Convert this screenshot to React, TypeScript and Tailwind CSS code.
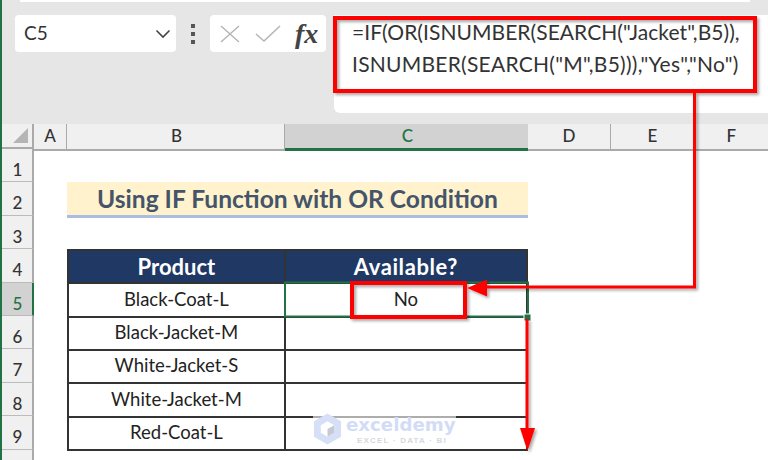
const rowNums = [1, 2, 3, 4, 5, 6, 7, 8, 9];
const products: Record<number, string> = {
  5: 'Black-Coat-L',
  6: 'Black-Jacket-M',
  7: 'White-Jacket-S',
  8: 'White-Jacket-M',
  9: 'Red-Coat-L',
};

const Cols = ({ children }: { children?: React.ReactNode }) => (
  <div className="grid h-full grid-cols-[33px_218px_243px_83px_84px_73px]">{children}</div>
);

const FormulaBar = () => (
  <div className="relative flex h-[124px] items-start gap-[7px] bg-[#e6e6e6] pt-[15px] pl-[13px]">
    {/* strip of the ribbon above the formula bar */}
    <div className="absolute top-0 left-[18px] h-[2px] w-[730px] bg-white" />
    <div className="flex h-[37px] w-[161px] items-center justify-between rounded-[4px] bg-white pr-[5px] pl-[9px] text-[19px] text-[#333]">
      C5
      <svg width="16" height="10" viewBox="0 0 16 10" fill="none" stroke="#444" strokeWidth="1.6"><path d="M1.5 1.5 8 8l6.5-6.500" /></svg>
    </div>
    <div className="flex h-[37px] w-[20px] flex-col items-center justify-center gap-[4px]">
      <span className="h-[4px] w-[4px] bg-[#555]" />
      <span className="h-[4px] w-[4px] bg-[#555]" />
      <span className="h-[4px] w-[4px] bg-[#555]" />
    </div>
    <div className="flex h-[37px] w-[116px] items-center rounded-[4px] bg-white pl-[10px]">
      <svg width="20" height="18" viewBox="0 0 20 18" fill="none" stroke="#b5b5b5" strokeWidth="1.5"><path d="M1 1l18 16M19 1 1 17" /></svg>
      <svg className="ml-[15px]" width="26" height="17" viewBox="0 0 26 17" fill="none" stroke="#b5b5b5" strokeWidth="1.5"><path d="M1 9l8 7L25 1" /></svg>
      <span className="ml-[14px] font-['Liberation_Serif',serif] text-[28px] leading-none font-bold text-[#444] italic">fx</span>
    </div>
    <div className="ml-[1px] h-[98px] w-[434px] rounded-bl-[6px] bg-white pt-[1px] pl-[18px] text-[21px] leading-[32px] whitespace-nowrap text-[#333]">
      <div className="tracking-[0.05px]">=IF(OR(ISNUMBER(SEARCH("Jacket",B5)),</div>
      <div className="tracking-[0.25px]">ISNUMBER(SEARCH("M",B5))),"Yes","No")</div>
    </div>
  </div>
);

const ColumnHeader = () => (
  <div className="flex h-[25px] bg-[#f0f0f0] text-[17px] leading-[24px] font-medium text-[#333]">
    <div className="relative w-[32px] border-r-2 border-b-2 border-[#aaa]">
      <span className="absolute right-[4px] bottom-[4px] h-0 w-0 border-b-[15px] border-l-[15px] border-b-[#b5b5b5] border-l-transparent" />
    </div>
    <div className="w-[736px]">
      <Cols>
        <div className="border-r border-b-2 border-[#aaa] text-center">A</div>
        <div className="border-r border-b-2 border-[#aaa] pl-[2px] text-center">B</div>
        <div className="border-b-[3px] border-[#217346] bg-[#d2d2d2] pl-[2px] text-center text-[#217346]">C</div>
        <div className="border-r border-b-2 border-[#aaa] text-center">D</div>
        <div className="border-r border-b-2 border-[#aaa] text-center">E</div>
        <div className="border-b-2 border-[#aaa] text-center">F</div>
      </Cols>
    </div>
  </div>
);

const SheetRow = ({ n }: { n: number }) => {
  const selected = n === 5;
  const isTable = n >= 4;
  return (
    <div className="flex h-[33.4px]">
      <div className={`w-[32px] border-b border-[#bbb] pt-[8px] pl-[1px] text-center text-[17px] leading-[26px] font-medium ${selected ? 'border-r-2 border-r-[#217346] bg-[#d2d2d2] text-[#217346]' : 'border-r-2 border-r-[#aaa] bg-[#f0f0f0] text-[#333]'}`}>
        {n}
      </div>
      <div className="w-[736px]">
        <Cols>
          <div />
          {n === 2 ? (
            <div className="col-span-2 border-b-[3px] border-[#a9bde0] bg-[#fff2cc] text-center text-[24.6px] leading-[33px] font-bold text-[#44546a]">
              Using IF Function with OR Condition
            </div>
          ) : isTable ? (
            <>
              <div className={`border-r border-b-2 border-l-2 border-[#333] text-center ${n === 4 ? 'border-t-2 bg-[#203864] text-[22px] leading-[31px] font-bold text-white' : 'text-[18.5px] leading-[33px] text-[#222]'}`}>
                {n === 4 ? 'Product' : products[n]}
              </div>
              <div className={`border-r-2 border-b-2 border-l border-[#333] text-center ${n === 4 ? 'border-t-2 bg-[#203864] text-[22px] leading-[31px] font-bold tracking-[0.6px] text-white' : 'text-[18.5px] leading-[33px] text-[#222]'}`}>
                {n === 4 ? 'Available?' : n === 5 ? 'No' : ''}
              </div>
            </>
          ) : null}
        </Cols>
      </div>
    </div>
  );
};

// red callouts and the selected cell frame, drawn over the sheet
const Overlay = () => (
  <svg className="pointer-events-none absolute top-0 left-0" width="768" height="460" viewBox="0 0 768 460" fill="none">
    <defs>
      <filter id="sh" x="-10%" y="-10%" width="120%" height="120%">
        <feDropShadow dx="2" dy="2" stdDeviation="1.5" floodColor="#000" floodOpacity="0.35" />
      </filter>
    </defs>
    <rect x="285" y="282.500" width="243" height="34" stroke="#217346" strokeWidth="2" />
    <rect x="524" y="314" width="7" height="7" fill="#217346" stroke="#fff" />
    <g filter="url(#sh)">
      <rect x="335" y="18" width="420" height="73" stroke="#f00" strokeWidth="4" />
      <rect x="352" y="283" width="113" height="34" fill="none" stroke="#f00" strokeWidth="4" />
      <path d="M694.500 92v195H485" stroke="#f00" strokeWidth="3" />
      <path d="M467 288l20-8.500v17z" fill="#f00" />
      <path d="M527 319v110" stroke="#f00" strokeWidth="3" />
      <path d="M520 428h15l-7.500 23z" fill="#f00" />
    </g>
  </svg>
);

const Watermark = () => (
  <div className="absolute top-[413px] left-[313px] flex bg-white/60">
    <svg width="29" height="32" viewBox="0 0 30 32">
      <path d="M15 0l14 8v16l-14 8-14-8V8z" fill="#d5dff5" />
      <path d="M15 8l7 4v8l-7 4-7-4v-8z" fill="#fff" />
      <path d="M15 16l7-4v8l-7 4z" fill="#c4c9d4" />
    </svg>
    <div className="ml-[4px] flex flex-col">
      <span className="font-['DejaVu_Sans',sans-serif] text-[18.2px] leading-[24px] font-bold text-[#d3dcf7]">exceldemy</span>
      <span className="ml-[11px] font-['Liberation_Sans',sans-serif] text-[8px] leading-[7px] font-bold tracking-[1.2px] whitespace-nowrap text-[#d5d8de]">EXCEL · DATA · BI</span>
    </div>
  </div>
);

export default function App() {
  return (
    <div className="relative h-[460px] w-[768px] overflow-hidden border-l-2 border-[#217346] bg-white font-['Lato','Noto_Sans',sans-serif]">
      <FormulaBar />
      <ColumnHeader />
      {rowNums.map((n) => (
        <SheetRow key={n} n={n} />
      ))}
      <div className="flex h-[12px]">
        <div className="w-[32px] border-r-2 border-[#aaa] bg-[#f0f0f0]" />
      </div>
      <div className="absolute top-0 -left-[2px]">
        <Watermark />
      </div>
      <div className="absolute top-0 -left-[2px]">
        <Overlay />
      </div>
    </div>
  );
}
